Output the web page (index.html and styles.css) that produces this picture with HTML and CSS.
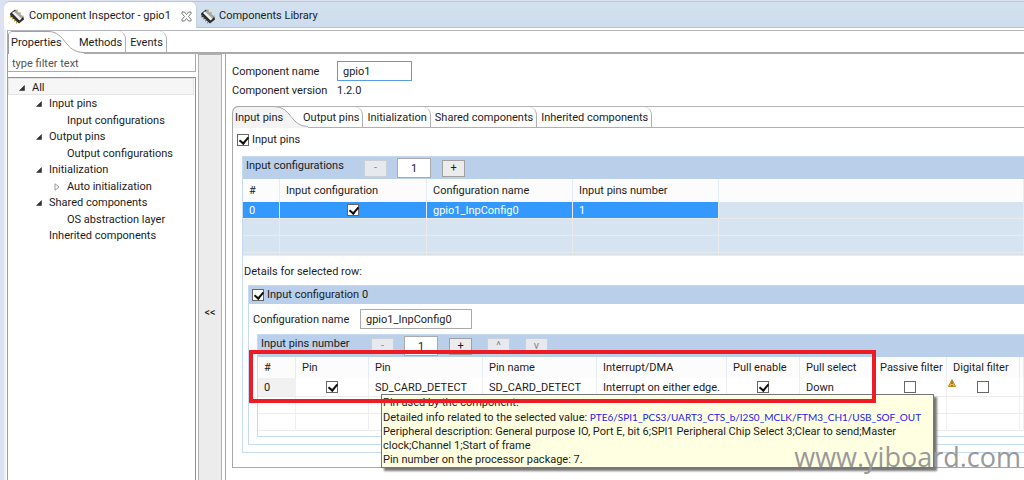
FILE: index.html
```html
<!DOCTYPE html>
<html lang="en">
<head>
<meta charset="utf-8">
<title>Component Inspector - gpio1</title>
<link rel="stylesheet" href="styles.css">
</head>
<body>
<svg class="defs" aria-hidden="true">
  <symbol id="chip" viewBox="0 0 16 16">
    <path d="M1 5.500 6 1.500 15 10 10 14.500Z" fill="#222"/>
    <path d="M4 4.500 7 2 14 9 11.500 11.500Z" fill="#a8a8a8"/>
    <path d="M3 5 4.800 3.500 12.500 10.800 10.500 12.600Z" fill="#f4f4f4"/>
    <path d="M1 5.500V8L10 15.500 15 11.500V10L10 13.500Z" fill="#333"/>
    <path d="M1.500 7V9.500M3.500 9V11.500M5.500 11V13.500M7.500 13V15.500M8 1.500V3.500M11 4V6M14 7.500V9" stroke="#b59b2c" stroke-width="1"/>
  </symbol>
  <symbol id="open" viewBox="0 0 8 8"><path d="M1.500 6.500H6.500V1.500Z" fill="#333" stroke="#222" stroke-width=".5"/></symbol>
  <symbol id="shut" viewBox="0 0 8 8"><path d="M2 .8 6 4 2 7.200Z" fill="#fff" stroke="#999"/></symbol>
</svg>
<div class="window">
  <nav class="views">
    <button class="view view-on"><svg class="chip"><use href="#chip"/></svg>Component Inspector - gpio1
      <svg class="close" viewBox="0 0 11 11"><path d="M1 1H3.500L5.500 3.500 7.500 1H10V2.500L7.500 5.500 10 8.500V10H7.500L5.500 7.500 3.500 10H1V8.500L3.500 5.500 1 2.500Z" fill="#fff" stroke="#777"/></svg>
    </button>
    <button class="view"><svg class="chip"><use href="#chip"/></svg>Components Library</button>
  </nav>
  <div class="frame">
    <nav class="tabs tabs-top">
      <button class="tab tab-on tab-props"><svg class="curve" viewBox="0 0 76 23"><path d="M.5 23V3L3 .5H40C58 .5 56 21.500 76 21.500V23Z" fill="#fff"/><path d="M.5 23V3L3 .5H40C58 .5 56 21.500 76 21.500" fill="none" stroke="#a0a0a4"/></svg><span>Properties</span></button>
      <button class="tab">Methods</button>
      <button class="tab">Events</button>
    </nav>
    <div class="body">
      <aside class="side">
        <input class="filter" type="text" placeholder="type filter text" aria-label="type filter text">
        <ul class="tree">
          <li class="lv0 sel"><svg><use href="#open"/></svg>All</li>
          <li class="lv1"><svg><use href="#open"/></svg>Input pins</li>
          <li class="lv2"><svg></svg>Input configurations</li>
          <li class="lv1"><svg><use href="#open"/></svg>Output pins</li>
          <li class="lv2"><svg></svg>Output configurations</li>
          <li class="lv1"><svg><use href="#open"/></svg>Initialization</li>
          <li class="lv2"><svg><use href="#shut"/></svg>Auto initialization</li>
          <li class="lv1"><svg><use href="#open"/></svg>Shared components</li>
          <li class="lv2"><svg></svg>OS abstraction layer</li>
          <li class="lv1"><svg></svg>Inherited components</li>
        </ul>
      </aside>
      <button class="sash">&lt;&lt;</button>
      <main class="main">
        <div class="facts">
          <label for="cname">Component name</label><input id="cname" class="text focus" type="text" value="gpio1">
          <span>Component version</span><span>1.2.0</span>
        </div>
        <nav class="tabs tabs-sub">
          <button class="tab tab-on tab-pins"><svg class="curve" viewBox="0 0 76 22"><path d="M.5 22V7Q1 .5 7 .5H42C60 .5 58 20.500 76 20.500V22Z" fill="#f3f3f3"/><path d="M.5 22V7Q1 .5 7 .5H42C60 .5 58 20.500 76 20.500" fill="none" stroke="#a8a8a8"/></svg><span>Input pins</span></button>
          <button class="tab">Output pins</button>
          <button class="tab">Initialization</button>
          <button class="tab">Shared components</button>
          <button class="tab">Inherited components</button>
        </nav>
        <section class="page">
          <label class="check"><input type="checkbox" checked>Input pins</label>
          <div class="group outer">
            <header class="bar">
              <span class="bar-name name-a">Input configurations</span>
              <button class="step" disabled>-</button><input class="count" type="text" value="1" aria-label="Input configurations"><button class="step">+</button>
            </header>
            <table class="grid configs">
              <colgroup><col class="a1"><col class="a2"><col class="a3"><col class="a3"><col></colgroup>
              <thead><tr><th>#</th><th>Input configuration</th><th>Configuration name</th><th>Input pins number</th><th></th></tr></thead>
              <tbody>
                <tr class="picked"><td>0</td><td class="mid"><input type="checkbox" checked aria-label="Input configuration"></td><td>gpio1_InpConfig0</td><td>1</td><td></td></tr>
                <tr><td></td><td></td><td></td><td></td><td></td></tr>
                <tr><td></td><td></td><td></td><td></td><td></td></tr>
                <tr class="stub"><td></td><td></td><td></td><td></td><td></td></tr>
              </tbody>
            </table>
            <p class="details">Details for selected row:</p>
            <div class="group config">
              <header class="bar bar-low"><label class="check"><input type="checkbox" checked>Input configuration 0</label></header>
              <div class="field"><label for="cfg">Configuration name</label><input id="cfg" class="text" type="text" value="gpio1_InpConfig0"></div>
              <div class="group pins">
                <header class="bar">
                  <span class="bar-name name-b">Input pins number</span>
                  <button class="step" disabled>-</button><input class="count" type="text" value="1" aria-label="Input pins number"><button class="step">+</button>
                  <button class="step move" disabled>^</button><button class="step move" disabled>v</button>
                </header>
                <table class="grid pinlist">
                  <colgroup><col class="b1"><col class="b2"><col class="b3"><col class="b3"><col class="b4"><col class="b2"><col class="b5"><col class="b6"><col class="b2"><col></colgroup>
                  <thead><tr><th>#</th><th>Pin</th><th>Pin</th><th>Pin name</th><th>Interrupt/DMA</th><th>Pull enable</th><th>Pull select</th><th>Passive filter</th><th>Digital filter</th><th></th></tr></thead>
                  <tbody>
                    <tr><td class="num">0</td><td class="mid"><input type="checkbox" checked aria-label="Pin"></td><td>SD_CARD_DETECT</td><td>SD_CARD_DETECT</td><td>Interrupt on either edge.</td><td class="mid"><input type="checkbox" checked aria-label="Pull enable"></td><td>Down</td><td class="mid"><input type="checkbox" aria-label="Passive filter"></td><td class="mid"><svg class="warn" viewBox="0 0 8 8"><path d="M4 .5 7.500 7.500H.5Z" fill="#f0b840" stroke="#c08a28" stroke-linejoin="round"/><path d="M4 2.500V5M4 6V7" stroke="#5a3a00"/></svg><input type="checkbox" aria-label="Digital filter"></td><td></td></tr>
                    <tr><td></td><td></td><td></td><td></td><td></td><td></td><td></td><td></td><td></td><td></td></tr>
                    <tr><td></td><td></td><td></td><td></td><td></td><td></td><td></td><td></td><td></td><td></td></tr>
                  </tbody>
                </table>
                <div class="tip" role="tooltip">Pin used by the component.<br>Detailed info related to the selected value: <span class="signal">PTE6/SPI1_PCS3/UART3_CTS_b/I2S0_MCLK/FTM3_CH1/USB_SOF_OUT</span><br>Peripheral description: General purpose IO, Port E, bit 6;SPI1 Peripheral Chip Select 3;Clear to send;Master<br>clock;Channel 1;Start of frame<br>Pin number on the processor package: 7.</div>
                <div class="mark"></div>
              </div>
            </div>
          </div>
        </section>
      </main>
    </div>
  </div>
  <div class="site">www.yiboard.com</div>
</div>
</body>
</html>
```
FILE: styles.css
```css
* { box-sizing: border-box; }
body { margin: 0; background: #dde2f3; color: #1c1c1c; font: 11px/16px Roboto, "Open Sans", sans-serif; }
button, input { font: inherit; color: inherit; margin: 0; padding: 0; border: 0; border-radius: 0; background: none; }
.defs { position: absolute; width: 0; height: 0; }
.window { position: relative; height: 100vh; overflow: hidden; padding: 1px 0 0 4px; display: flex; flex-direction: column; }
.views { display: flex; height: 27px; border-top: 1px solid #bcc3db; border-bottom: 1px solid #b8c1d8; border-radius: 6px 0 0 0; background: linear-gradient(#d3e1ef, #cddded); flex: none; }
.view { display: flex; align-items: center; gap: 4px; padding: 2px 4px 0 5px; }
.view-on { background: #fff; border-radius: 6px 6px 0 0; margin-bottom: -1px; width: 193px; border-right: 1px solid #c8d0e2; }
.view + .view { padding-left: 3px; gap: 3px; }
.chip { width: 16px; height: 16px; flex: none; }
.close { width: 11px; height: 11px; margin: 0 0 0 auto; }
.frame { flex: 1; min-height: 0; display: flex; flex-direction: column; background: #fff; border-left: 2px solid #eef0f8; padding: 1px 0 0 1px; border-top: 1px solid #fff; }
.tabs { display: flex; position: relative; background: #fff; }
.tabs-top { height: 24px; flex: none; border-top: 1px solid #b4b4bc; border-left: 1px solid #a9a9b0; box-shadow: inset 0 -2px #a9a9ae; }
.tab { position: relative; padding: 2px 3px 0 4px; margin-bottom: 2px; border-right: 1px solid #b0b0b0; border-top-right-radius: 8px; white-space: nowrap; }
.tab span { position: relative; }
.tab-on { border: 0; margin: 0; text-align: left; padding-left: 3px; }
.tab-props { width: 67px; padding-bottom: 2px; }
.curve { position: absolute; left: 0; top: 0; width: 76px; height: 100%; }
.body { flex: 1; min-height: 0; display: flex; }
.side { width: 189px; flex: none; display: flex; flex-direction: column; gap: 5px; border-left: 1px solid #9a9aa2; }
.filter { height: 18px; border: 1px solid #ababb3; border-top: 0; border-left: 0; padding: 2px 4px 0; width: 100%; }
.filter::placeholder { color: #555; opacity: 1; }
.tree { flex: 1; margin: 0; padding: 0 1px 0 0; list-style: none; border: 1px solid #8b8f96; border-left: 0; border-bottom: 0; }
.tree li { display: flex; align-items: center; gap: 6px; height: 16px; padding-top: 2px; }
.tree li:nth-child(odd) { height: 17px; }
.tree svg { width: 8px; height: 8px; flex: none; }
.tree .lv0 { padding-left: 10px; }
.tree .lv1 { padding-left: 27px; }
.tree .lv2 { padding-left: 45px; }
.sel { background: #f6f6f6; box-shadow: inset 0 0 0 1px #e4e4e4; }
.sash { width: 24px; flex: none; margin: 0 3px 0 2px; border: 1px solid #b2b2b2; border-bottom: 0; background: #ececec; padding-top: 90px; }
.main { flex: 1; min-width: 0; border-left: 1px solid #a6a6ae; padding: 7px 0 0 6px; }
.facts { display: grid; grid-template-columns: 99px 75px; gap: 2px 6px; align-items: center; white-space: nowrap; }
.facts label, .field label { padding-top: 2px; }
.text { height: 20px; border: 1px solid #aaa; padding: 1px 5px 0; background: #fff; }
.focus { border-color: #569de5; }
.tabs-sub { height: 22px; margin-top: 7px; border-top: 1px solid #b4b4b4; box-shadow: inset 0 -1px #b0b0b0; border-top-left-radius: 6px; }
.tabs-sub .tab { margin-bottom: 1px; }
.tabs-sub .tab-on { width: 67px; margin: -1px 0 0; }
.page { border-left: 1px solid #a8a8a8; border-bottom: 1px solid #a8a8a8; padding: 4px 0 14px 4px; }
.check { display: flex; align-items: center; gap: 3px; }
input[type=checkbox] { appearance: none; width: 12px; height: 12px; flex: none; border: 1px solid #666; background: #fff; display: block; }
input[type=checkbox]:checked::after { content: ""; display: block; width: 4px; height: 7px; margin: 0 0 0 3px; border: solid #111; border-width: 0 2px 2px 0; transform: rotate(40deg); }
.group { border: 1px solid #c5daf0; border-right: 0; position: relative; }
.outer { margin: 8px 0 0 5px; padding-bottom: 7px; }
.bar { display: flex; align-items: center; height: 22px; background: #b9cfea; padding-left: 3px; }
.bar-low { height: 18px; padding-left: 3px; }
.bar-name { align-self: flex-start; padding-top: 1px; }
.name-a { width: 118px; }
.name-b { width: 110px; }
.step { width: 23px; height: 17px; border: 1px solid #a0a0a0; background: #ececec; line-height: 12px; }
.step:disabled { border-color: #c9d0d8; background: #e6eaef; color: #888; }
.count { width: 34px; height: 20px; border: 1px solid #aaa; background: #fff; text-align: center; margin: 0 11px 0 10px; }
.move { margin-left: 15px; }
.grid { width: 100%; table-layout: fixed; border-collapse: separate; border-spacing: 0; }
.grid th, .grid td { padding: 1px 0 0 6px; text-align: left; font-weight: normal; white-space: nowrap; overflow: hidden; }
.grid th { background: #fcfcfd; border-right: 1px solid #e4edf7; }
.grid .mid { padding: 0; position: relative; }
.mid input { margin: 0 auto; }
.configs th { height: 23px; }
.configs td { height: 17px; background: #d6e3f1; border-right: 1px solid #eaeaea; border-bottom: 1px solid #eaeaea; line-height: 15px; }
.configs .stub td { height: 3px; }
.configs .picked td:not(:last-child) { background: #3399ff; color: #fff; }
.a1 { width: 37px; } .a2 { width: 147px; } .a3 { width: 146px; }
.details { margin: 8px 0 5px 1px; }
.config { margin-left: 5px; padding-bottom: 7px; }
.field { display: flex; align-items: center; gap: 8px; padding: 5px 0 5px 4px; }
.field label { width: 99px; white-space: nowrap; }
.field .text { width: 112px; }
.pins { margin-left: 8px; padding-bottom: 5px; }
.pinlist th { height: 21px; }
.pinlist td { height: 17px; line-height: 15px; border-right: 1px solid #f0f0f0; border-bottom: 1px solid #ececec; }
.pinlist tr:first-child td { height: 19px; }
.pinlist .num { background: #f1f1f1; }
.b1 { width: 38px; } .b2 { width: 73px; } .b3 { width: 114px; } .b4 { width: 130px; } .b5 { width: 74px; } .b6 { width: 73px; }
.warn { position: absolute; left: 1px; top: 1px; width: 8px; height: 8px; }
.tip { position: absolute; left: 123px; top: 59px; width: 553px; padding: 1px 0 0 1px; background: #ffffe1; border: 1px solid #767676; box-shadow: 3px 3px 2px #777; line-height: 14px; white-space: nowrap; }
.signal { color: #2418f0; font-size: 10px; font-family: Lato, sans-serif; }
.mark { position: absolute; left: -9px; top: 15px; width: 627px; height: 53px; border: 4px solid #ed1c24; }
.site { position: absolute; right: 3px; bottom: 5px; font: 27px/36px "Open Sans", sans-serif; color: #999; }
```
